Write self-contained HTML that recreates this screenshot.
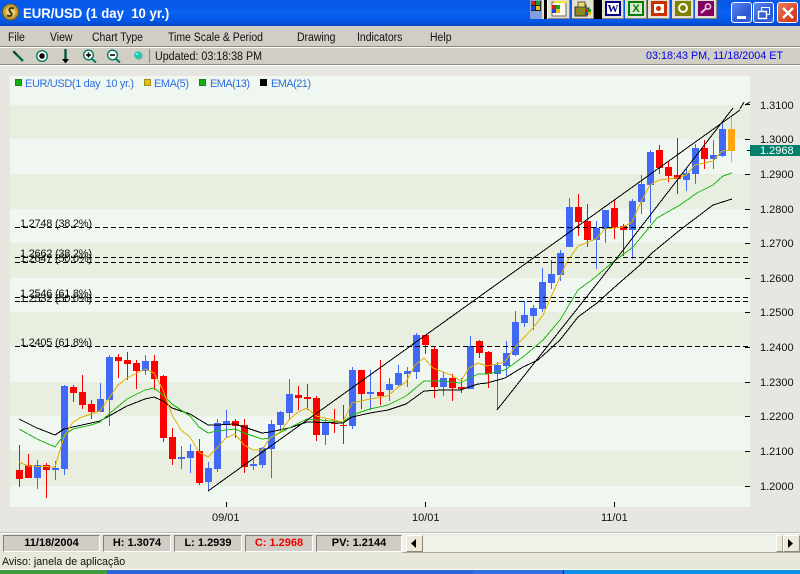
<!DOCTYPE html>
<html><head><meta charset="utf-8"><title>EUR/USD</title>
<style>
html,body{margin:0;padding:0}
body{width:800px;height:574px;overflow:hidden;position:relative;background:#e8e6e0;font:11px "Liberation Sans",sans-serif;color:#000}
.a{position:absolute;white-space:pre}
.m{top:31px;line-height:14px;font-size:11.5px;color:#111;transform-origin:0 50%;transform:scaleX(.91)}
.p{top:535px;height:15px;background:#d0cdc5;border:1px solid;border-color:#808080 #fff #fff #808080;text-align:center;font-weight:bold;line-height:15px;font-size:11px;box-sizing:content-box}
.b{top:0;height:19px;width:22px;background:#e4e1d3;box-shadow:inset -1px -1px 0 #8a877c}
.i{position:absolute;left:3px;top:1px;width:16px;height:15px;box-sizing:border-box;border:2px dotted;background:#fff}
.w{top:2px;width:21px;height:21px;box-sizing:border-box;border:1px solid #fff;border-radius:3px;background:linear-gradient(135deg,#5c86ec,#2a55d0 70%,#3c6ae0)}
</style></head><body>
<!-- title bar -->
<div class="a" style="left:0;top:0;width:800px;height:26px;background:linear-gradient(#0a5ae6 0,#0457e8 15%,#0a60f0 50%,#0558e6 80%,#0346c4 100%)"></div>
<svg class="a" style="left:0;top:0" width="22" height="24"><circle cx="10.5" cy="12" r="8" fill="#c8a030" stroke="#6b5a20"/><circle cx="10.5" cy="12" r="5" fill="#e8d070"/><path d="M14 8.5C10 7 8 9 10.5 12S11 17 7 15.5" fill="none" stroke="#4a3a10" stroke-width="2"/></svg>
<div class="a" style="left:23px;top:4px;color:#fff;font:bold 14px/18px 'Liberation Sans',sans-serif;transform-origin:0 50%;transform:scaleX(.94)">EUR/USD (1 day  10 yr.)</div>
<div class="a" style="left:530px;top:0;width:12px;height:19px;background:#7f9fe0"></div>
<svg class="a" style="left:531px;top:1px" width="10" height="10"><rect width="10" height="10" fill="#222"/><rect x="0" y="0" width="4" height="4" fill="#d02020"/><rect x="5" y="0" width="4" height="4" fill="#20a020"/><rect x="0" y="5" width="4" height="4" fill="#2040d0"/><rect x="5" y="5" width="4" height="4" fill="#e0c020"/></svg>
<div class="a" style="left:542px;top:0;width:2px;height:19px;background:#e4e1d3"></div>
<div class="a" style="left:544px;top:0;width:3px;height:19px;background:#000"></div>
<div class="a" style="left:547px;top:0;width:1px;height:19px;background:#fff"></div>
<div class="a b" style="left:548px"></div>
<svg class="a" style="left:550px;top:1px" width="18" height="17"><rect x="2" y="1" width="14" height="14" fill="#fdfbe8" stroke="#666"/><rect x="4" y="0" width="13" height="2" fill="#f0e040"/><rect x="2" y="4" width="4" height="4" fill="#d02020"/><rect x="6" y="4" width="4" height="4" fill="#20a020"/><rect x="2" y="8" width="4" height="4" fill="#2040d0"/><rect x="6" y="8" width="4" height="4" fill="#e0c020"/></svg>
<div class="a b" style="left:572px"></div>
<svg class="a" style="left:574px;top:1px" width="18" height="17"><path d="M1 6h4l1-2h6v3h3l-2 8H1z" fill="#8a8a20" stroke="#333"/><path d="M4 1h7v5H4z" fill="#f0e060" stroke="#555"/><rect x="11" y="8" width="3" height="3" fill="#d02020"/><rect x="14" y="8" width="3" height="3" fill="#20a020"/><rect x="11" y="11" width="3" height="3" fill="#2040d0"/><rect x="14" y="11" width="3" height="3" fill="#e0c020"/></svg>
<div class="a" style="left:594px;top:0;width:8px;height:19px;background:#000"></div>
<div class="a b" style="left:602px"><div class="i" style="border-color:#000080;background:#000080"></div><div class="a" style="left:5px;top:3px;width:12px;height:11px;background:#fff;color:#000080;font:bold 11px/12px 'Liberation Serif',serif;text-align:center">W</div></div>
<div class="a b" style="left:625px"><div class="i" style="border-color:#008000;background:#008000"></div><div class="a" style="left:5px;top:3px;width:12px;height:11px;background:#d8e8d0;color:#008000;font:bold 11px/12px 'Liberation Sans',sans-serif;text-align:center">X</div></div>
<div class="a b" style="left:648px"><div class="i" style="border-color:#c83000;background:#c83000"></div><div class="a" style="left:6px;top:4px;width:10px;height:9px;background:#fff"></div><div class="a" style="left:8px;top:6px;width:5px;height:5px;background:#c83000;border-radius:3px"></div></div>
<div class="a b" style="left:672px"><div class="i" style="border-color:#808000;background:#808000"></div><div class="a" style="left:6px;top:3px;width:10px;height:10px;box-sizing:border-box;border:2px solid #fff;border-radius:5px"></div></div>
<div class="a b" style="left:695px"><div class="i" style="border-color:#800060;background:#800060"></div><svg class="a" style="left:5px;top:3px" width="12" height="11"><circle cx="8" cy="3.5" r="2.6" fill="none" stroke="#f0c8e0" stroke-width="1.6"/><path d="M6 5.5L1 10" stroke="#f0c8e0" stroke-width="2"/></svg></div>
<div class="a w" style="left:731px"><div class="a" style="left:5px;top:13px;width:9px;height:3px;background:#fff"></div></div>
<div class="a w" style="left:753px"><svg class="a" style="left:3px;top:3px" width="14" height="14"><rect x="4.5" y="1.5" width="8" height="7" fill="none" stroke="#fff"/><rect x="1.5" y="5.5" width="8" height="7" fill="#3a62d8" stroke="#fff" stroke-width="1.4"/></svg></div>
<div class="a w" style="left:777px;background:linear-gradient(135deg,#e88060,#d84020 70%,#c83818)"><svg class="a" style="left:3px;top:3px" width="14" height="14"><path d="M2 2L12 12M12 2L2 12" stroke="#fff" stroke-width="2.4"/></svg></div>

<!-- menu -->
<div class="a" style="left:0;top:26px;width:800px;height:20px;background:#d1cec6"></div>
<div class="a" style="left:0;top:46px;width:800px;height:1px;background:#8b8a85"></div>
<div class="a" style="left:0;top:47px;width:800px;height:1px;background:#fff"></div>
<div class="a" style="left:0;top:48px;width:800px;height:16px;background:#d1cec6"></div>
<div class="a" style="left:0;top:64px;width:800px;height:1px;background:#8b8a85"></div>
<div class="a" style="left:0;top:65px;width:800px;height:1px;background:#fff"></div>
<div class="a m" style="left:8px">File</div>
<div class="a m" style="left:50px">View</div>
<div class="a m" style="left:92px">Chart Type</div>
<div class="a m" style="left:168px">Time Scale &amp; Period</div>
<div class="a m" style="left:297px">Drawing</div>
<div class="a m" style="left:357px">Indicators</div>
<div class="a m" style="left:430px">Help</div>

<!-- toolbar -->
<svg class="a" style="left:0;top:46px" width="152" height="20">
<path d="M13.5 5.5L23 15" stroke="#006a50" stroke-width="2.4"/><path d="M13 5L17 9" stroke="#222" stroke-width="1"/>
<circle cx="42" cy="10" r="5.3" fill="#fff" stroke="#007a60" stroke-width="1.4"/><circle cx="42" cy="10" r="2.8" fill="#000"/>
<path d="M65.5 3V13" stroke="#005a40" stroke-width="2.4"/><path d="M62 13h7l-3.5 4.5z" fill="#000"/>
<circle cx="88.5" cy="9" r="4.8" fill="#fff" stroke="#007a60" stroke-width="1.4"/><path d="M86 9h5M88.5 6.5v5" stroke="#000" stroke-width="1.6"/><path d="M92 13l4 3.5" stroke="#007a60" stroke-width="2"/>
<circle cx="112.5" cy="9" r="4.8" fill="#fff" stroke="#007a60" stroke-width="1.4"/><path d="M110 9h5" stroke="#000" stroke-width="1.6"/><path d="M116 13l4 3.5" stroke="#007a60" stroke-width="2"/>
<circle cx="139" cy="10" r="4" fill="#aaa8a0"/><circle cx="138" cy="9" r="3.8" fill="#18cdb0"/><circle cx="137" cy="8" r="1.2" fill="#80f0e0"/>
<path d="M149.5 3V17" stroke="#8b8a85"/>
</svg>
<div class="a" style="left:155px;top:50px;line-height:14px;font-size:11.5px;color:#111;transform-origin:0 50%;transform:scaleX(.93)">Updated: 03:18:38 PM</div>
<div class="a" style="left:646px;top:49px;line-height:14px;font-size:11px;color:#0000e6;transform-origin:0 50%;transform:scaleX(.98)">03:18:43 PM, 11/18/2004 ET</div>

<!-- chart -->
<svg class="a" style="left:0;top:66px" width="800" height="466" viewBox="0 66 800 466" font-family="Liberation Sans, sans-serif" font-size="11">
<rect x="10" y="76" width="740" height="431" fill="#f0f7f0"/>
<g fill="#e8efe0">
<rect x="10" y="105" width="740" height="34"/><rect x="10" y="174" width="740" height="35"/><rect x="10" y="243" width="740" height="35"/><rect x="10" y="312" width="740" height="35"/><rect x="10" y="382" width="740" height="34"/><rect x="10" y="451" width="740" height="35"/>
</g>
<g shape-rendering="crispEdges">
<g fill="#ff0000" stroke="none">
<path d="M16 470h7v9h-7zM25 465h7v13h-7zM43 465h7v5h-7zM70 387h7v6h-7zM79 392h7v13h-7zM88 404h7v8h-7zM115 357h7v4h-7zM124 360h7v4h-7zM133 363h7v8h-7zM151 361h7v18h-7zM160 376h7v62h-7zM169 437h7v22h-7zM196 451h7v32h-7zM232 421h7v5h-7zM241 425h7v42h-7zM295 395h7v3h-7zM304 397h7v2h-7zM313 398h7v37h-7zM331 423h7v1h-7zM340 425h7v1h-7zM358 370h7v24h-7zM377 392h7v4h-7zM422 335h7v10h-7zM431 349h7v38h-7zM449 378h7v10h-7zM458 387h7v2h-7zM476 341h7v12h-7zM485 352h7v22h-7zM575 207h7v15h-7zM584 221h7v19h-7zM611 208h7v20h-7zM620 226h7v4h-7zM656 150h7v18h-7zM665 167h7v9h-7zM674 175h7v4h-7zM701 148h7v11h-7z"/>
</g>
<path stroke="#ff0000" fill="none" d="M19.5 445V487M28.5 454V478M46.5 463V498M73.5 385V402M82.5 375V409M91.5 400V419M118.5 354V378M127.5 352V380M136.5 360V389M154.5 355V390M163.5 375V442M172.5 428V465M199.5 439V485M235.5 419V438M244.5 419V473M298.5 386V410M307.5 384V410M316.5 396V441M334.5 409V433M343.5 405V444M361.5 370V409M380.5 360V405M425.5 335V354M434.5 347V398M452.5 374V401M461.5 378V393M479.5 340V358M488.5 351V388M578.5 194V236M587.5 204V247M614.5 199V239M623.5 224V256M659.5 145V174M668.5 161V182M677.5 138V194M704.5 140V169"/>
<g fill="#4169f5">
<path d="M34 465h7v13h-7zM52 468h7v2h-7zM61 386h7v83h-7zM97 399h7v13h-7zM106 357h7v43h-7zM142 361h7v10h-7zM178 457h7v2h-7zM187 451h7v7h-7zM205 468h7v14h-7zM214 423h7v46h-7zM223 421h7v3h-7zM250 464h7v2h-7zM259 448h7v17h-7zM268 424h7v25h-7zM277 412h7v13h-7zM286 394h7v19h-7zM322 423h7v12h-7zM349 370h7v56h-7zM367 392h7v2h-7zM386 384h7v6h-7zM395 373h7v12h-7zM404 371h7v3h-7zM413 335h7v37h-7zM440 378h7v9h-7zM467 346h7v43h-7zM494 365h7v9h-7zM503 353h7v13h-7zM512 322h7v33h-7zM521 315h7v8h-7zM530 308h7v8h-7zM539 282h7v27h-7zM548 274h7v9h-7zM557 253h7v22h-7zM566 207h7v40h-7zM593 228h7v12h-7zM602 210h7v19h-7zM629 201h7v29h-7zM638 184h7v18h-7zM647 152h7v33h-7zM683 173h7v7h-7zM692 148h7v26h-7zM710 155h7v4h-7zM719 129h7v27h-7z"/>
</g>
<path stroke="#4169f5" fill="none" d="M37.5 460V489M55.5 461V480M64.5 385V475M100.5 383V412M109.5 355V426M145.5 355V375M181.5 446V469M190.5 444V473M208.5 462V491M217.5 419V472M226.5 410V438M253.5 458V470M262.5 447V468M271.5 420V478M280.5 411V433M289.5 379V420M325.5 419V445M352.5 367V429M370.5 370V410M389.5 378V401M398.5 365V386M407.5 367V387M416.5 333V379M443.5 372V396M470.5 336V389M497.5 362V410M506.5 341V376M515.5 311V356M524.5 301V327M533.5 305V330M542.5 268V312M551.5 260V289M560.5 250V281M569.5 198V247M596.5 221V269M605.5 210V243M632.5 199V259M641.5 175V214M650.5 150V223M686.5 168V191M695.5 144V184M713.5 140V169M722.5 123V157"/>
<path d="M728 129h7v22h-7z" fill="#ffa510"/><path d="M731.5 116V162" stroke="#ffa510"/>
<!-- dashed -->
<g stroke="#000" stroke-dasharray="5 3" fill="none">
<path d="M15 227.5H750M15 257.5H750M15 262.5H750M15 297.5H750M15 301.5H750M15 346.5H750"/>
</g>
</g>
<!-- EMA lines -->
<g fill="none" stroke-width="1" shape-rendering="crispEdges">
<polyline stroke="#000" points="19,419 37,428 55,435 64,429 82,425 100,421 109,416 127,406 145,399 154,397 163,401 172,408 190,414 208,425 217,425 235,424 244,427 262,433 270,432 289,428 307,422 343,423 352,417 370,413 388,410 406,404 424,391 442,390 460,390 478,384 487,383 505,378 523,367 538,360 560,340 578,317 597,303 617,285 640,265 652,253 680,230 713,205 732,199"/>
<polyline stroke="#20b810" points="19,429 37,439 55,447 64,435 73,429 91,425 100,422 109,414 127,399 145,390 154,388 163,395 172,404 190,416 199,427 208,433 217,431 235,429 244,433 262,439 270,438 289,428 307,419 343,422 352,415 370,409 388,405 406,396 424,381 442,381 460,383 478,374 487,374 505,370 523,357 543,340 560,320 578,290 593,279 613,262 633,247 657,218 680,205 697,193 713,185 723,176 732,173"/>
<polyline stroke="#e0b000" points="19,462 28,466 55,467 64,437 73,422 82,417 100,411 109,398 118,385 127,378 145,369 154,373 163,390 172,415 181,430 190,437 199,452 208,457 217,448 226,438 235,434 244,445 253,450 262,450 270,438 280,432 289,420 298,412 307,408 316,416 334,420 343,422 352,403 370,399 388,396 397,388 406,382 415,365 424,358 433,368 451,375 461,381 469,368 478,363 487,366 505,362 514,348 533,328 543,315 551,297 560,277 568,260 578,246 596,239 605,229 623,227 632,222 641,202 650,185 659,180 677,178 686,175 695,165 713,161 722,151 731,150"/>
<path stroke="#000" d="M208 491L740 110"/>
<path stroke="#000" d="M497 410L600 280L733 108"/>
<path stroke="#000" d="M740 109L744 102"/>
<path stroke="#000" d="M745 105L750 102"/>
</g>
<!-- fib labels -->
<g fill="#111">
<text x="20" y="227" textLength="72">1.2748 (38.2%)</text>
<text x="20" y="257" textLength="72">1.2662 (38.2%)</text>
<text x="20" y="262" textLength="72">1.2647 (50.0%)</text>
<text x="20" y="297" textLength="72">1.2546 (61.8%)</text>
<text x="20" y="302" textLength="72">1.2532 (50.0%)</text>
<text x="20" y="346" textLength="72">1.2405 (61.8%)</text>
</g>
<!-- legend -->
<g shape-rendering="crispEdges">
<rect x="15.5" y="79.5" width="6" height="6" fill="#10b010" stroke="#208020"/>
<rect x="144.5" y="79.5" width="6" height="6" fill="#e8c000" stroke="#a09020"/>
<rect x="199.5" y="79.5" width="6" height="6" fill="#10b010" stroke="#208020"/>
<rect x="260" y="79" width="7" height="7" fill="#000"/>
</g>
<g fill="#2c6fe0" style="white-space:pre">
<text x="25" y="87" textLength="109" style="white-space:pre">EUR/USD(1 day  10 yr.)</text>
<text x="154" y="87" textLength="35">EMA(5)</text>
<text x="210" y="87" textLength="40">EMA(13)</text>
<text x="271" y="87" textLength="40">EMA(21)</text>
</g>
<!-- right axis -->
<g stroke="#000" shape-rendering="crispEdges">
<path d="M745 104.5H750M745 139.5H750M745 174.5H750M745 209.5H750M745 243.5H750M745 278.5H750M745 312.5H750M745 347.5H750M745 382.5H750M745 416.5H750M745 451.5H750M745 486.5H750M747 150.5H750"/>
<path d="M226.5 502V507M425.5 502V507M614.5 502V507"/>
</g>
<rect x="750" y="145" width="50" height="11" fill="#00806a"/>
<g fill="#111">
<text x="760" y="109">1.3100</text>
<text x="760" y="143">1.3000</text>
<text x="760" y="178">1.2900</text>
<text x="760" y="213">1.2800</text>
<text x="760" y="247">1.2700</text>
<text x="760" y="282">1.2600</text>
<text x="760" y="316">1.2500</text>
<text x="760" y="351">1.2400</text>
<text x="760" y="386">1.2300</text>
<text x="760" y="420">1.2200</text>
<text x="760" y="455">1.2100</text>
<text x="760" y="490">1.2000</text>
<text x="212" y="521">09/01</text>
<text x="412" y="521">10/01</text>
<text x="601" y="521">11/01</text>
</g>
<text x="760" y="154" fill="#fff">1.2968</text>
</svg>

<!-- status row -->
<div class="a" style="left:0;top:532px;width:800px;height:1px;background:#bdbbb4"></div>
<div class="a" style="left:0;top:533px;width:800px;height:1px;background:#fff"></div>
<div class="a" style="left:0;top:534px;width:800px;height:19px;background:#e6e4da"></div>
<div class="a p" style="left:3px;width:95px">11/18/2004</div>
<div class="a p" style="left:103px;width:66px">H: 1.3074</div>
<div class="a p" style="left:174px;width:66px">L: 1.2939</div>
<div class="a p" style="left:245px;width:66px;color:#f00000">C: 1.2968</div>
<div class="a p" style="left:316px;width:84px">PV: 1.2144</div>
<!-- scrollbar -->
<div class="a" style="left:402px;top:535px;width:398px;height:17px;background:#f1f3e8"></div>
<div class="a" style="left:402px;top:552px;width:398px;height:1px;background:#aca899"></div>
<div class="a" style="left:406px;top:535px;width:17px;height:17px;box-sizing:border-box;background:#ece9d8;border:1px solid;border-color:#fff #8a887c #8a887c #fff"></div>
<div class="a" style="left:776px;top:535px;width:7px;height:17px;box-sizing:border-box;background:#ece9d8;border:1px solid;border-color:#fff #aca899 #8a887c #fff"></div>
<div class="a" style="left:783px;top:535px;width:17px;height:17px;box-sizing:border-box;background:#ece9d8;border:1px solid;border-color:#fff #8a887c #8a887c #fff"></div>
<svg class="a" style="left:406px;top:535px" width="394" height="17"><path d="M5 8.5L10 4V13zM382 4L387 8.5L382 13z" fill="#000"/></svg>
<!-- message -->
<div class="a" style="left:0;top:553px;width:800px;height:16px;background:#e8e8d8"></div>
<div class="a" style="left:2px;top:555px;line-height:14px;font-size:11px;color:#111;transform-origin:0 50%;transform:scaleX(.97)">Aviso: janela de aplicação</div>
<!-- taskbar -->
<div class="a" style="left:0;top:569px;width:800px;height:1px;background:#fff"></div>
<div class="a" style="left:0;top:570px;width:107px;height:4px;background:#3f9c3f"></div>
<div class="a" style="left:107px;top:570px;width:366px;height:4px;background:#2a62d8"></div>
<div class="a" style="left:473px;top:570px;width:90px;height:4px;background:#2f6fe0"></div>
<div class="a" style="left:563px;top:570px;width:1px;height:4px;background:#07306a"></div>
<div class="a" style="left:564px;top:570px;width:236px;height:4px;background:#0e8fe8"></div>
</body></html>
